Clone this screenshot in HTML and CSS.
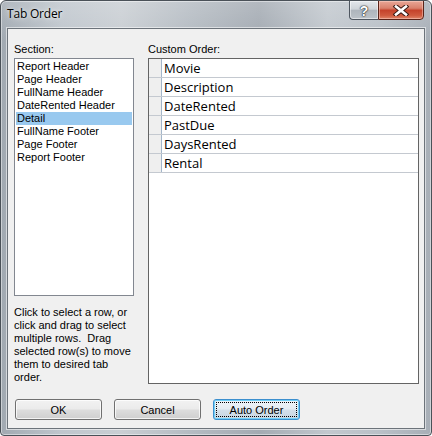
FILE: index.html
```html
<!DOCTYPE html>
<html>
<head>
<meta charset="utf-8">
<link rel="stylesheet" href="styles.css">
</head>
<body>
<div class="window">
  <div class="titlebar">
    <div class="title">Tab Order</div>
    <div class="caption-buttons">
      <div class="cbtn help">?</div>
      <div class="cbtn close">
        <svg width="18" height="11" viewBox="0 0 18 11">
          <path d="M4 1.5 L14 9.5 M14 1.5 L4 9.5" stroke="#3a1a14" stroke-width="4.6" stroke-linecap="square" fill="none"/>
          <path d="M4 1.5 L14 9.5 M14 1.5 L4 9.5" stroke="#ffffff" stroke-width="2.6" stroke-linecap="square" fill="none"/>
        </svg>
      </div>
    </div>
  </div>
  <div class="client">
    <div class="panes">
      <div class="col">
        <div class="label">Section:</div>
        <div class="listbox">
          <div class="item">Report Header</div>
          <div class="item">Page Header</div>
          <div class="item">FullName Header</div>
          <div class="item">DateRented Header</div>
          <div class="item selected">Detail</div>
          <div class="item">FullName Footer</div>
          <div class="item">Page Footer</div>
          <div class="item">Report Footer</div>
        </div>
        <div class="hint">Click to select a row, or<br>click and drag to select<br>multiple rows.&nbsp; Drag<br>selected row(s) to move<br>them to desired tab<br>order.</div>
      </div>
      <div class="col">
        <div class="label">Custom Order:</div>
        <div class="grid">
          <div class="row"><div class="sel"></div><div class="cell">Movie</div></div>
          <div class="row"><div class="sel"></div><div class="cell">Description</div></div>
          <div class="row"><div class="sel"></div><div class="cell">DateRented</div></div>
          <div class="row"><div class="sel"></div><div class="cell">PastDue</div></div>
          <div class="row"><div class="sel"></div><div class="cell">DaysRented</div></div>
          <div class="row"><div class="sel"></div><div class="cell">Rental</div></div>
        </div>
      </div>
    </div>
    <div class="buttons">
      <button class="btn">OK</button>
      <button class="btn">Cancel</button>
      <button class="btn default">Auto Order</button>
    </div>
  </div>
</div>
</body>
</html>
```

FILE: styles.css
```css
html, body {
  margin: 0;
  padding: 0;
  background: #ffffff;
}

.window {
  width: 432px;
  height: 436px;
  box-sizing: border-box;
  border: 1px solid #4a5158;
  border-radius: 6px 6px 4px 4px;
  display: flex;
  flex-direction: column;
  overflow: hidden;
  background:
    linear-gradient(180deg, rgba(255,255,255,0.18) 0%, rgba(255,255,255,0) 40px),
    linear-gradient(90deg, #a1a9b1 0%, #bfc6cd 14%, #c9ced3 28%, #b3bac1 45%, #a3aab2 60%, #c2c8ce 76%, #b9c0c7 88%, #a7aeb6 100%);
  box-shadow: inset 0 0 0 1px rgba(255,255,255,0.45);
}

.titlebar {
  height: 27px;
  flex: none;
  display: flex;
  padding-left: 6px;
  box-sizing: border-box;
}

.title {
  flex: 1;
  padding-top: 5px;
  font-family: "Open Sans", "Noto Sans", sans-serif;
  font-size: 12px;
  line-height: 16px;
  letter-spacing: -0.2px;
  color: #000;
  text-shadow: 0 0 6px rgba(255,255,255,0.8), 0 0 3px rgba(255,255,255,0.6);
}

.caption-buttons {
  display: flex;
  align-self: flex-start;
  margin-right: 7px;
  margin-top: -1px;
  height: 20px;
}

.cbtn {
  height: 20px;
  box-sizing: border-box;
  display: flex;
  align-items: center;
  justify-content: center;
}

.help {
  width: 29px;
  border: 1px solid #4f5760;
  border-right: none;
  border-radius: 0 0 0 4px;
  background: linear-gradient(180deg, #e3e7eb 0%, #cfd4d9 45%, #aeb5bc 52%, #bcc2c8 100%);
  box-shadow: inset 0 0 0 1px rgba(255,255,255,0.5);
  font-family: "Liberation Sans", Arial, sans-serif;
  font-weight: bold;
  font-size: 14px;
  color: #ffffff;
  text-shadow: 0 0 1px #202428, 0 0 1px #202428, 0 0 2px #3a4046;
  padding-top: 1px;
}

.close {
  width: 46px;
  border: 1px solid #5a2318;
  border-radius: 0 0 4px 0;
  background: linear-gradient(180deg, #e9a797 0%, #d9806c 40%, #c5432b 52%, #cf5a3e 80%, #e0866a 100%);
  box-shadow: inset 0 0 0 1px rgba(255,220,210,0.45);
}

.close svg {
  display: block;
}

.client {
  flex: 1;
  margin: 0 6px 6px 6px;
  border: 1px solid #6c737a;
  box-shadow: 0 0 0 1px rgba(255,255,255,0.55);
  background: #f0f0f0;
  box-sizing: border-box;
  padding: 14px 5px 0 6px;
  font-family: "Liberation Sans", Arial, sans-serif;
  font-size: 11px;
  color: #000;
}

.panes {
  display: grid;
  grid-template-columns: 120px 271px;
  column-gap: 14px;
  align-items: start;
}

.label {
  line-height: 13px;
  height: 13px;
  margin-bottom: 2px;
  white-space: nowrap;
}

.listbox {
  height: 238px;
  box-sizing: border-box;
  border: 1px solid #828790;
  background: #ffffff;
  padding: 1px;
}

.item {
  height: 13px;
  line-height: 13px;
  padding-left: 1px;
  white-space: nowrap;
}

.item.selected {
  background: #99c9ef;
}

.hint {
  margin-top: 10px;
  line-height: 13px;
  white-space: nowrap;
}

.grid {
  height: 326px;
  box-sizing: border-box;
  border: 1px solid #646464;
  background: #ffffff;
}

.row {
  display: flex;
  height: 19px;
  box-sizing: border-box;
  border-bottom: 1px solid #c4c9d0;
}

.sel {
  width: 12px;
  flex: none;
  background: #efefef;
  border-right: 1px solid #a3b6ca;
}

.cell {
  flex: 1;
  padding-left: 2px;
  font-family: "Open Sans", "Noto Sans", sans-serif;
  font-size: 13px;
  line-height: 18px;
  white-space: nowrap;
}

.buttons {
  display: flex;
  gap: 12px;
  margin-top: 15px;
  padding-left: 1px;
}

.btn {
  width: 87px;
  height: 21px;
  box-sizing: border-box;
  border: 1px solid #707070;
  border-radius: 3px;
  background: linear-gradient(180deg, #f2f2f2 0%, #ebebeb 48%, #dddddd 52%, #cfcfcf 100%);
  box-shadow: inset 0 0 0 1px rgba(255,255,255,0.75);
  font-family: "Liberation Sans", Arial, sans-serif;
  font-size: 11px;
  color: #000;
  padding: 0;
  margin: 0;
}

.btn.default {
  border-color: #3c8fce;
  background: linear-gradient(180deg, #eef4f8 0%, #e4ecf2 48%, #d4e0ea 52%, #c8d6e2 100%);
  box-shadow: inset 0 0 0 1px #6fd0f8;
  outline: 1px dotted #000;
  outline-offset: -4px;
}
```
